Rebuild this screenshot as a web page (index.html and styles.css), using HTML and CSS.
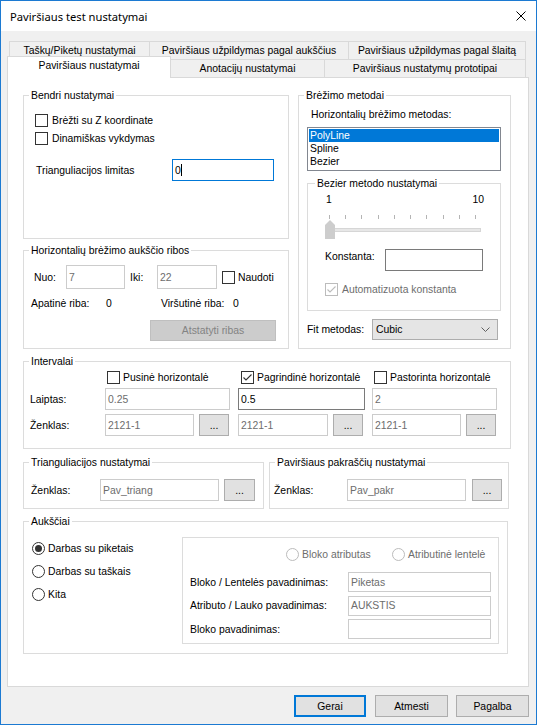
FILE: index.html
```html
<!DOCTYPE html>
<html>
<head>
<meta charset="utf-8">
<title>Paviršiaus test nustatymai</title>
<link rel="stylesheet" href="styles.css">
</head>
<body>
<div class="window">
  <div class="titlebar">
    <span class="title">Paviršiaus test nustatymai</span>
    <svg class="close" width="10" height="10" viewBox="0 0 10 10"><path d="M0.5 0.5 L9.5 9.5 M9.5 0.5 L0.5 9.5" stroke="#000" stroke-width="1" fill="none"/></svg>
  </div>

  <div class="tabs">
    <div class="tabrow">
      <div class="tab t1">Taškų/Piketų nustatymai</div>
      <div class="tab t2">Paviršiaus užpildymas pagal aukščius</div>
      <div class="tab t3 last">Paviršiaus užpildymas pagal šlaitą</div>
    </div>
    <div class="tabrow">
      <div class="tab sel">Paviršiaus nustatymai</div>
      <div class="tab t5">Anotacijų nustatymai</div>
      <div class="tab t6 last">Paviršiaus nustatymų prototipai</div>
    </div>
  </div>

  <div class="panel">
    <div class="toprow">
      <div class="leftcol">
        <div class="grp g-bendri">
          <div class="lg">Bendri nustatymai</div>
          <div class="bendri-in">
            <div class="chkrow"><span class="cb"></span><span>Brėžti su Z koordinate</span></div>
            <div class="chkrow"><span class="cb"></span><span>Dinamiškas vykdymas</span></div>
            <div class="tri-row">
              <span class="tri-lbl">Trianguliacijos limitas</span>
              <div class="tb focus w102">0<span class="caret"></span></div>
            </div>
          </div>
        </div>

        <div class="grp g-hor">
          <div class="lg">Horizontalių brėžimo aukščio ribos</div>
          <div class="hor-in">
            <div class="nuo-row">
              <span class="l-nuo">Nuo:</span>
              <div class="tb dis w59 h24">7</div>
              <span class="l-iki">Iki:</span>
              <div class="tb dis w60 h24">22</div>
              <span class="cb ml5"></span><span>Naudoti</span>
            </div>
            <div class="riba-row">
              <span class="w75">Apatinė riba:</span><span class="w55">0</span><span class="w72">Viršutinė riba:</span><span>0</span>
            </div>
            <div class="btn disbtn reset">Atstatyti ribas</div>
          </div>
        </div>
      </div>

      <div class="grp g-brez">
        <div class="lg">Brėžimo metodai</div>
        <div class="brez-in">
          <div class="hm-lbl">Horizontalių brėžimo metodas:</div>
          <div class="listbox">
            <div class="li sel">PolyLine</div>
            <div class="li">Spline</div>
            <div class="li">Bezier</div>
          </div>
          <div class="grp g-bez">
            <div class="lg lg7">Bezier metodo nustatymai</div>
            <div class="bez-in">
              <div class="scale"><span>1</span><span>10</span></div>
              <div class="ticks"><i></i><i></i><i></i><i></i><i></i><i></i><i></i><i></i><i></i><i></i></div>
              <div class="slider">
                <div class="track"></div>
                <svg class="thumb" width="10" height="19" viewBox="0 0 10 19"><path d="M0 5 L5 0 L10 5 V19 H0 Z" fill="#cdcdcd"/></svg>
              </div>
              <div class="konst-row"><span class="konst-lbl">Konstanta:</span><div class="tb w98"></div></div>
              <div class="chkrow auto"><span class="cb cbdis"><svg width="11" height="11" viewBox="0 0 11 11"><path d="M1.5 5.5 L4 8 L9.5 2.5" fill="none" stroke="#bcbcbc" stroke-width="1.1"/></svg></span><span class="distext">Automatizuota konstanta</span></div>
            </div>
          </div>
          <div class="fit-row">
            <span class="fit-lbl">Fit metodas:</span>
            <div class="combo"><span>Cubic</span><svg width="9" height="5" viewBox="0 0 9 5"><path d="M0.5 0.5 L4.5 4.5 L8.5 0.5" fill="none" stroke="#606060" stroke-width="1"/></svg></div>
          </div>
        </div>
      </div>
    </div>

    <div class="grp g-int">
      <div class="lg">Intervalai</div>
      <div class="int-in">
        <div class="irow r1">
          <span class="c0"></span>
          <span class="c1 cc1"><span class="cb"></span>Pusinė horizontalė</span>
          <span class="c2 cc2"><span class="cb"><svg width="11" height="11" viewBox="0 0 11 11"><path d="M1.5 5.5 L4 8 L9.5 2.5" fill="none" stroke="#333" stroke-width="1.1"/></svg></span>Pagrindinė horizontalė</span>
          <span class="c3 cc3"><span class="cb"></span>Pastorinta horizontalė</span>
        </div>
        <div class="irow r2">
          <span class="c0">Laiptas:</span>
          <span class="c1"><span class="tb dis w125 h22">0.25</span></span>
          <span class="c2"><span class="tb w127 h22">0.5</span></span>
          <span class="c3"><span class="tb dis w125 h22">2</span></span>
        </div>
        <div class="irow r3">
          <span class="c0">Ženklas:</span>
          <span class="c1"><span class="tb dis w89 h22">2121-1</span><span class="btn dots">...</span></span>
          <span class="c2"><span class="tb dis w90 h22">2121-1</span><span class="btn dots">...</span></span>
          <span class="c3"><span class="tb dis w89 h22">2121-1</span><span class="btn dots">...</span></span>
        </div>
      </div>
    </div>

    <div class="trow">
      <div class="grp g-tri">
        <div class="lg">Trianguliacijos nustatymai</div>
        <div class="tri-in">
          <span class="zl1">Ženklas:</span>
          <span class="tb dis w119 h22">Pav_triang</span>
          <span class="btn dots d5">...</span>
        </div>
      </div>
      <div class="grp g-pak">
        <div class="lg">Paviršiaus pakraščių nustatymai</div>
        <div class="pak-in">
          <span class="zl2">Ženklas:</span>
          <span class="tb dis w119 h22">Pav_pakr</span>
          <span class="btn dots d6">...</span>
        </div>
      </div>
    </div>

    <div class="grp g-auk">
      <div class="lg">Aukščiai</div>
      <div class="auk-in">
        <div class="radios">
          <div class="rrow"><span class="rb"><span class="dot"></span></span>Darbas su piketais</div>
          <div class="rrow"><span class="rb"></span>Darbas su taškais</div>
          <div class="rrow"><span class="rb"></span>Kita</div>
        </div>
        <div class="inner">
          <div class="irad">
            <span class="rw"><span class="rb rbdis"></span>Bloko atributas</span>
            <span class="rw2"><span class="rb rbdis"></span>Atributinė lentelė</span>
          </div>
          <div class="arow first"><span class="al">Bloko / Lentelės pavadinimas:</span><span class="tb dis w143 h20">Piketas</span></div>
          <div class="arow"><span class="al">Atributo / Lauko pavadinimas:</span><span class="tb dis w143 h20">AUKSTIS</span></div>
          <div class="arow"><span class="al">Bloko pavadinimas:</span><span class="tb w143 h20 lite"></span></div>
        </div>
      </div>
    </div>
  </div>

  <div class="btns">
    <div class="btn gerai">Gerai</div>
    <div class="btn atm">Atmesti</div>
    <div class="btn pag">Pagalba</div>
  </div>
</div>
</body>
</html>
```

FILE: styles.css
```css
* { box-sizing: border-box; }
html, body { margin: 0; padding: 0; }
body {
  width: 537px;
  height: 725px;
  overflow: hidden;
  background: #f0f0f0;
  font-family: "Liberation Sans", Arial, sans-serif;
  font-size: 10.4px;
  line-height: 13px;
  color: #000;
}
.window {
  width: 537px;
  height: 725px;
  border: 1px solid #1c7ad2;
  background: #f0f0f0;
}
.titlebar {
  height: 30px;
  background: #fff;
  display: flex;
  align-items: center;
  justify-content: space-between;
  padding: 0 10px 0 9px;
}
.title {
  font-family: "Noto Sans", sans-serif;
  font-size: 11.2px;
}

/* tabs */
.tabs { margin: 10px 0 0 8px; }
.tabrow { display: flex; height: 18px; align-items: flex-start; }
.tab {
  height: 18px;
  border: 1px solid #d9d9d9;
  border-bottom: none;
  border-right: none;
  background: #f0f0f0;
  text-align: center;
  line-height: 17px;
  white-space: nowrap;
}
.tab.last { border-right: 1px solid #d9d9d9; }
.t1 { width: 140px; }
.t2 { width: 199px; }
.t3 { width: 178px; }
.tab.sel {
  position: relative;
  z-index: 1;
  width: 164px;
  height: 22px;
  margin: -3px -1px -1px -2px;
  background: #fff;
  border-right: 1px solid #d9d9d9;
}
.t5 { width: 154px; }
.t6 { width: 202px; }

/* panel */
.panel {
  margin-left: 6px;
  width: 522px;
  height: 610px;
  border: 1px solid #d9d9d9;
  background: #fff;
  padding: 17px 0 0 15px;
}
.grp {
  border: 1px solid #dcdcdc;
}
.lg {
  display: table;
  margin: -7px 0 0 5px;
  padding: 0 2px;
  background: #fff;
  line-height: 13px;
  white-space: nowrap;
}
.lg.lg7 { margin-left: 7px; }
.toprow { display: flex; gap: 9px; }
.leftcol { width: 266px; }
.g-bendri { height: 144px; }
.g-hor { height: 99px; margin-top: 11px; }
.g-brez { width: 213px; height: 254px; }

/* controls */
.cb {
  width: 13px;
  height: 13px;
  border: 1px solid #333;
  background: #fff;
  margin-right: 4px;
  flex: none;
  display: inline-flex;
}
.cb.cbdis { border-color: #bcbcbc; }
.chkrow { display: flex; align-items: center; height: 18px; }
.tb {
  height: 22px;
  border: 1px solid #7a7a7a;
  background: #fff;
  display: inline-flex;
  align-items: center;
  padding-left: 2px;
  flex: none;
  white-space: nowrap;
}
.tb.dis { border-color: #cccccc; color: #6d6d6d; }
.tb.lite { border-color: #cccccc; }
.tb.focus { border-color: #0078d7; }
.caret { display: inline-block; width: 1px; height: 12px; background: #000; }
.h20 { height: 20px; }
.h22 { height: 22px; }
.h24 { height: 24px; }
.w59 { width: 59px; }
.w60 { width: 60px; }
.w89 { width: 89px; }
.w90 { width: 90px; }
.w98 { width: 98px; }
.w102 { width: 102px; }
.w119 { width: 119px; }
.w125 { width: 125px; }
.w127 { width: 127px; }
.w143 { width: 143px; }
.btn {
  height: 22px;
  border: 1px solid #adadad;
  background: #e1e1e1;
  display: inline-flex;
  align-items: center;
  justify-content: center;
  flex: none;
}
.disbtn { background: #cccccc; border-color: #bfbfbf; color: #838383; }
.dots { width: 30px; margin-left: 5px; }
.d5 { width: 31px; margin-left: 5px; }
.d6 { width: 30px; margin-left: 6px; }

/* Bendri */
.bendri-in { padding: 9px 0 0 11px; }
.tri-row { display: flex; align-items: center; margin-top: 12px; }
.tri-lbl { width: 137px; padding-left: 1px; }

/* Horizontaliu ribos */
.hor-in { padding: 8px 0 0 7px; }
.nuo-row { display: flex; align-items: center; height: 24px; margin-left: 3px; }
.l-nuo { width: 32px; }
.l-iki { width: 27px; margin-left: 5px; }
.ml5 { margin-left: 5px; margin-right: 3px; }
.riba-row { display: flex; align-items: center; height: 15px; margin-top: 7px; }
.w75 { width: 75px; }
.w55 { width: 55px; }
.w72 { width: 72px; }
.reset { margin: 9px 0 0 119px; width: 126px; height: 21px; display: flex; }

/* Brezimo metodai */
.brez-in { padding: 6px 0 0 8px; }
.hm-lbl { margin-left: 4px; }
.listbox {
  margin-top: 6px;
  width: 194px;
  height: 44px;
  border: 1px solid #828790;
  padding: 1px;
  background: #fff;
}
.li { height: 13px; line-height: 13px; padding-left: 1px; }
.li.sel { background: #0078d7; color: #fff; }
.g-bez { margin-top: 12px; width: 194px; height: 128px; }
.bez-in { padding: 3px 0 0 18px; }
.scale { display: flex; justify-content: space-between; width: 158px; }
.ticks { display: flex; justify-content: space-between; width: 147px; height: 4px; margin: 9px 0 0 3px; }
.ticks i { display: block; width: 1px; height: 4px; background: #b4b4b4; }
.slider { position: relative; height: 19px; margin-top: 1px; padding: 8px 0 0 3px; }
.track { width: 152px; height: 4px; background: #e7e7e7; border: 1px solid #d6d6d6; }
.thumb { position: absolute; left: -1px; top: 0; }
.konst-row { display: flex; align-items: flex-start; margin: 10px 0 0 -1px; }
.konst-lbl { width: 60px; margin-top: 1px; }
.chkrow.auto { height: 15px; margin: 11px 0 0 -1px; }
.distext { color: #6d6d6d; }
.fit-row { display: flex; align-items: center; height: 21px; margin-top: 8px; }
.fit-lbl { width: 65px; }
.combo {
  width: 126px;
  height: 21px;
  background: #e5e5e5;
  border: 1px solid #adadad;
  display: flex;
  align-items: center;
  justify-content: space-between;
  padding: 0 7px 0 3px;
}

/* Intervalai */
.g-int { width: 488px; height: 88px; margin-top: 12px; }
.int-in { padding: 2px 0 0 6px; }
.irow { display: flex; align-items: center; }
.r1 { height: 14px; }
.r2 { height: 22px; margin-top: 4px; }
.r3 { height: 22px; margin-top: 4px; }
.c0 { width: 75px; flex: none; }
.c1 { width: 133px; flex: none; display: flex; align-items: center; }
.c2 { width: 134px; flex: none; display: flex; align-items: center; }
.c3 { width: 126px; flex: none; display: flex; align-items: center; }
.cc1 { padding-left: 2px; }
.cc2 { padding-left: 3px; }
.cc3 { padding-left: 2px; }
.r1 .cb { margin-right: 3px; }

/* Triangulation + edges */
.trow { display: flex; gap: 5px; margin-top: 13px; }
.g-tri { width: 241px; height: 47px; }
.g-pak { width: 240px; height: 47px; }
.tri-in { display: flex; align-items: center; padding: 10px 0 0 7px; }
.pak-in { display: flex; align-items: center; padding: 10px 0 0 4px; }
.zl1 { width: 69px; }
.zl2 { width: 73px; }

/* Aukščiai */
.g-auk { width: 485px; height: 133px; margin-top: 12px; }
.auk-in { display: flex; padding: 9px 0 0 8px; }
.radios { width: 150px; flex: none; }
.rrow { height: 23px; display: flex; align-items: center; }
.rb {
  width: 13px;
  height: 13px;
  border-radius: 50%;
  border: 1px solid #333;
  background: #fff;
  margin-right: 3px;
  flex: none;
  display: inline-flex;
  align-items: center;
  justify-content: center;
}
.rb.rbdis { border-color: #bcbcbc; }
.dot { width: 7px; height: 7px; border-radius: 50%; background: #333; }
.inner {
  width: 317px;
  height: 107px;
  border: 1px solid #dcdcdc;
  padding: 8px 7px 0 7px;
}
.irad { display: flex; align-items: center; height: 16px; margin-left: 96px; color: #6d6d6d; }
.rw { width: 106px; display: flex; align-items: center; }
.rw2 { display: flex; align-items: center; }
.arow { display: flex; align-items: center; height: 20px; margin-top: 3.5px; }
.arow.first { margin-top: 10px; }
.al { width: 158px; flex: none; }

/* dialog buttons */
.btns { display: flex; justify-content: flex-end; margin-top: 8px; padding-right: 7px; }
.gerai { width: 72px; border: 2px solid #0078d7; margin-right: 9px; }
.atm { width: 73px; margin-right: 8px; }
.pag { width: 73px; }
```
